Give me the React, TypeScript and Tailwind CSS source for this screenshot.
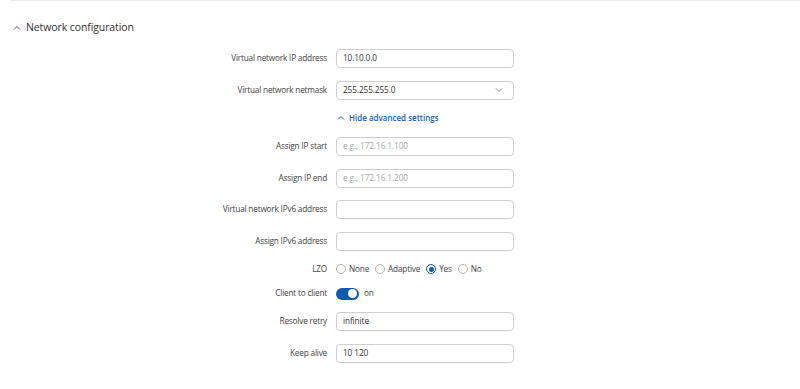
import React from "react";

const font = { fontFamily: '"Open Sans", "Noto Sans", sans-serif' };

function Label({ children }: { children: React.ReactNode }) {
  return (
    <div className="w-[327px] shrink-0 text-right text-[8.25px] tracking-[-0.2px] text-[#444] leading-none">
      {children}
    </div>
  );
}

function TextInput({ value, placeholder }: { value?: string; placeholder?: string }) {
  return (
    <div className="ml-[9px] flex h-[19px] w-[178px] items-center rounded-[4px] border border-[#cfcfcf] bg-white px-[6px] text-[8.25px] tracking-[-0.1px] leading-none">
      {value ? (
        <span className="text-[#333]">{value}</span>
      ) : placeholder ? (
        <span className="text-[#a8a8a8]">{placeholder}</span>
      ) : null}
    </div>
  );
}

function Row({ label, h, children }: { label: string; h: string; children: React.ReactNode }) {
  return (
    <div className={`flex items-center ${h}`}>
      <Label>{label}</Label>
      {children}
    </div>
  );
}

function Radio({ label, checked }: { label: string; checked?: boolean }) {
  return (
    <div className="flex items-center gap-[3px]">
      {checked ? (
        <span className="flex h-[10px] w-[10px] items-center justify-center rounded-full border border-[#1257b0] bg-white">
          <span className="h-[5px] w-[5px] rounded-full bg-[#1257b0]" />
        </span>
      ) : (
        <span className="h-[10px] w-[10px] rounded-full border border-[#b5b5b5] bg-white" />
      )}
      <span className="text-[8.25px] tracking-[-0.2px] leading-none text-[#444]">{label}</span>
    </div>
  );
}

export default function App() {
  return (
    <div className="h-[389px] w-[800px] overflow-hidden bg-white" style={font}>
      <div className="ml-[10px] h-px bg-[#ececec]" />
      <div className="h-[41px] pt-[17px]">
        <div className="flex h-[19px] items-center">
          <svg className="ml-[13px]" width="8" height="8" viewBox="0 0 8 8" fill="none">
            <path d="M1 5.5 L4 2.5 L7 5.5" stroke="#444" strokeWidth="0.9" />
          </svg>
          <span className="ml-[5px] text-[10.5px] tracking-[-0.1px] text-[#333]">Network configuration</span>
        </div>
      </div>

      <Row label="Virtual network IP address" h="h-[32px]">
        <TextInput value="10.10.0.0" />
      </Row>
      <Row label="Virtual network netmask" h="h-[32px]">
        <div className="ml-[9px] flex h-[19px] w-[178px] items-center justify-between rounded-[4px] border border-[#cfcfcf] bg-white pl-[6px] pr-[10px] text-[8.25px] tracking-[-0.1px] leading-none text-[#333]">
          <span>255.255.255.0</span>
          <svg width="8" height="6" viewBox="0 0 8 6" fill="none">
            <path d="M1 1.5 L4 4.5 L7 1.5" stroke="#777" strokeWidth="0.8" />
          </svg>
        </div>
      </Row>
      <div className="flex h-[24px] items-center pl-[337px]">
        <svg width="8" height="6" viewBox="0 0 8 6" fill="none">
          <path d="M1 4.5 L4 1.5 L7 4.5" stroke="#1a5fb4" strokeWidth="1" />
        </svg>
        <span className="ml-[4px] text-[8px] font-semibold leading-none text-[#1a5fb4]">Hide advanced settings</span>
      </div>
      <Row label="Assign IP start" h="h-[32px]">
        <TextInput placeholder="e.g., 172.16.1.100" />
      </Row>
      <Row label="Assign IP end" h="h-[32px]">
        <TextInput placeholder="e.g., 172.16.1.200" />
      </Row>
      <Row label="Virtual network IPv6 address" h="h-[31px]">
        <TextInput />
      </Row>
      <Row label="Assign IPv6 address" h="h-[32px]">
        <TextInput />
      </Row>
      <Row label="LZO" h="h-[24px]">
        <div className="ml-[9px] flex items-center gap-[6px]">
          <Radio label="None" />
          <Radio label="Adaptive" />
          <Radio label="Yes" checked />
          <Radio label="No" />
        </div>
      </Row>
      <Row label="Client to client" h="h-[25px]">
        <div className="ml-[9px] flex items-center">
          <div className="flex h-[12px] w-[23px] items-center justify-end rounded-full bg-[#1257b0] pr-[2px]">
            <span className="h-[9px] w-[9px] rounded-full bg-white" />
          </div>
          <span className="ml-[5px] text-[8.25px] tracking-[-0.2px] leading-none text-[#444]">on</span>
        </div>
      </Row>
      <Row label="Resolve retry" h="h-[31px]">
        <TextInput value="infinite" />
      </Row>
      <Row label="Keep alive" h="h-[32px]">
        <TextInput value="10 120" />
      </Row>
    </div>
  );
}
